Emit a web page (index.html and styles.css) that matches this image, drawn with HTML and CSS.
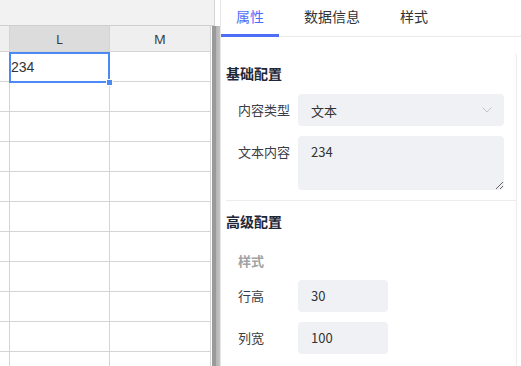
FILE: index.html
```html
<!DOCTYPE html>
<html lang="zh">
<head>
<meta charset="utf-8">
<title>Sheet</title>
<link rel="stylesheet" href="styles.css">
</head>
<body>
<div class="app">
  <div class="sheet">
    <div class="topbar"></div>
    <div class="sheet-body">
      <div class="grid">
        <div class="row head"><div class="c rh"></div><div class="c l cur">L</div><div class="c m">M</div></div>
        <div class="row"><div class="c rh"></div><div class="c l val">234</div><div class="c m"></div></div>
        <div class="row"><div class="c rh"></div><div class="c l"></div><div class="c m"></div></div>
        <div class="row"><div class="c rh"></div><div class="c l"></div><div class="c m"></div></div>
        <div class="row"><div class="c rh"></div><div class="c l"></div><div class="c m"></div></div>
        <div class="row"><div class="c rh"></div><div class="c l"></div><div class="c m"></div></div>
        <div class="row"><div class="c rh"></div><div class="c l"></div><div class="c m"></div></div>
        <div class="row"><div class="c rh"></div><div class="c l"></div><div class="c m"></div></div>
        <div class="row"><div class="c rh"></div><div class="c l"></div><div class="c m"></div></div>
        <div class="row"><div class="c rh"></div><div class="c l"></div><div class="c m"></div></div>
        <div class="row"><div class="c rh"></div><div class="c l"></div><div class="c m"></div></div>
        <div class="row"><div class="c rh"></div><div class="c l"></div><div class="c m"></div></div>
        <div class="selection"><span class="handle"></span></div>
      </div>
      <div class="vscroll"></div>
    </div>
  </div>
  <div class="panel">
    <div class="tabs">
      <div class="tab active">属性</div>
      <div class="tab">数据信息</div>
      <div class="tab">样式</div>
    </div>
    <div class="content">
      <div class="section">
        <div class="sec-title">基础配置</div>
        <div class="form-row">
          <span class="label">内容类型</span>
          <div class="select">
            <span>文本</span>
            <svg class="chev" width="10" height="6" viewBox="0 0 10 6"><polyline points="0.5,0.5 5,5 9.5,0.5" fill="none" stroke="#c0c4cc" stroke-width="1"/></svg>
          </div>
        </div>
        <div class="form-row top">
          <span class="label">文本内容</span>
          <textarea class="textarea" readonly>234</textarea>
        </div>
      </div>
      <div class="section adv">
        <div class="sec-title">高级配置</div>
        <div class="sub-title">样式</div>
        <div class="form-row">
          <span class="label">行高</span>
          <div class="input">30</div>
        </div>
        <div class="form-row">
          <span class="label">列宽</span>
          <div class="input">100</div>
        </div>
      </div>
    </div>
  </div>
</div>
</body>
</html>
```

FILE: styles.css
```css
* { box-sizing: border-box; }
html, body {
  margin: 0;
  padding: 0;
  width: 521px;
  height: 366px;
  overflow: hidden;
  background: #fff;
  font-family: "Noto Sans CJK SC", "Noto Sans", sans-serif;
}
.app {
  display: flex;
  width: 521px;
  height: 366px;
}
.sheet {
  width: 220px;
  flex: none;
  display: flex;
  flex-direction: column;
}
.topbar {
  width: 215px;
  height: 26px;
  background: #f2f2f2;
  border-bottom: 1px solid #cfcfcf;
  border-right: 1px solid #d6d6d6;
  flex: none;
}
.sheet-body {
  display: flex;
  flex: 1;
  min-height: 0;
}
.grid {
  position: relative;
  width: 212px;
  flex: none;
}
.row {
  display: flex;
  height: 30px;
}
.row.head {
  height: 26px;
}
.c {
  border-right: 1px solid #d4d4d4;
  border-bottom: 1px solid #d4d4d4;
  background: #fff;
  font-family: "Liberation Sans", Arial, sans-serif;
  font-size: 14px;
  color: #333;
}
.rh { width: 10px; }
.l { width: 100px; }
.m { width: 101px; }
.head .c {
  background: #efefef;
  font-family: "Noto Sans", sans-serif;
  font-size: 13px;
  color: #3a3a3a;
  display: flex;
  align-items: center;
  justify-content: center;
  padding-top: 1px;
}
.head .c.cur {
  background: #dcdcdc;
}
.val {
  display: flex;
  align-items: center;
  padding-left: 1px;
  padding-top: 1px;
}
.selection {
  position: absolute;
  left: 9px;
  top: 26px;
  width: 101px;
  height: 31px;
  border: 2px solid #4b89f5;
}
.handle {
  position: absolute;
  right: -5px;
  bottom: -5px;
  width: 7px;
  height: 7px;
  background: #4b89f5;
  border: 1px solid #fff;
}
.vscroll {
  width: 8px;
  flex: none;
  background: linear-gradient(to right, #9a9a9a 0, #9a9a9a 4px, #b4b4b4 4px, #c4c4c4 8px);
}
.panel {
  flex: 1;
  border-left: 1px solid #e6e6e6;
  display: flex;
  flex-direction: column;
  min-width: 0;
}
.tabs {
  display: flex;
  gap: 10px;
  height: 37px;
  box-shadow: inset 0 -1px 0 #eaeaea;
  flex: none;
}
.tab {
  height: 37px;
  padding: 0 15px;
  line-height: 32px;
  font-size: 14px;
  color: #333;
  border-bottom: 3px solid transparent;
}
.tab.active {
  color: #4f6ef6;
  border-bottom-color: #4f6ef6;
}
.content {
  margin: 16px 4px 0 5px;
  flex: 1;
  border-right: 1px solid #ececec;
  border-top-right-radius: 4px;
}
.section {
  padding: 10px 0 10px 0;
}
.section.adv {
  border-top: 1px solid #ececec;
}
.sec-title {
  font-size: 14px;
  font-weight: 700;
  line-height: 20px;
  color: #1e2738;
  margin-bottom: 11px;
}
.sub-title {
  font-size: 13px;
  font-weight: 700;
  line-height: 20px;
  color: #a3a3a3;
  margin: 20px 0 9px 12px;
}
.form-row {
  display: flex;
  align-items: center;
  padding-left: 12px;
  margin-bottom: 10px;
}
.form-row:last-child { margin-bottom: 0; }
.form-row.top { align-items: flex-start; }
.label {
  width: 60px;
  flex: none;
  font-size: 13px;
  line-height: 22px;
  color: #3a3d45;
}
.form-row.top .label { padding-top: 5px; }
.select {
  width: 206px;
  height: 32px;
  background: #f0f1f5;
  border-radius: 4px;
  display: flex;
  align-items: center;
  justify-content: space-between;
  padding: 0 12px 0 13px;
  font-size: 13px;
  color: #333;
}
.chev { display: block; }
.textarea {
  display: block;
  width: 206px;
  height: 54px;
  background: #f0f1f5;
  border: none;
  border-radius: 4px;
  padding: 5px 13px;
  font-family: "Noto Sans CJK SC", "Noto Sans", sans-serif;
  font-size: 13px;
  line-height: 22px;
  color: #333;
  resize: vertical;
  outline: none;
  margin: 0;
}
.input {
  width: 90px;
  height: 32px;
  background: #f0f1f5;
  border-radius: 4px;
  padding: 0 13px;
  font-size: 13px;
  line-height: 32px;
  color: #333;
}
```
